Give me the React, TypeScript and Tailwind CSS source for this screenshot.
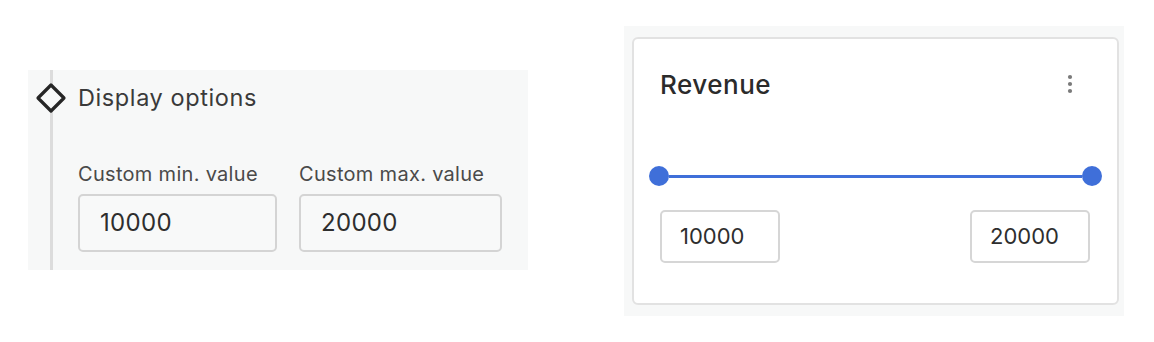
import React from "react";

function Diamond() {
    return (
        <svg width="32" height="32" viewBox="0 0 32 32" className="block">
            <path
                d="M16 3 L29 16 L16 29 L3 16 Z"
                fill="#f7f8f8"
                stroke="#262626"
                strokeWidth="3.2"
                strokeLinejoin="round"
            />
        </svg>
    );
}

function Kebab() {
    return (
        <svg width="6" height="20" viewBox="0 0 6 20" className="block">
            <circle cx="3" cy="3" r="2.1" fill="#7a7a7a" />
            <circle cx="3" cy="10" r="2.1" fill="#7a7a7a" />
            <circle cx="3" cy="17" r="2.1" fill="#7a7a7a" />
        </svg>
    );
}

function Field({ label, value, width }: { label: string; value: string; width: string }) {
    return (
        <div className={`flex flex-col ${width}`}>
            <label className="text-[20px] leading-[24px] text-[#4a4a4a] tracking-[0.3px] whitespace-nowrap">{label}</label>
            <div className="mt-[8px] h-[58px] rounded-[5px] border-2 border-[#d4d4d4] bg-[#f8f9f9] flex items-center pl-[20px] text-[24px] text-[#2e2e2e] tracking-[0.3px]">
                {value}
            </div>
        </div>
    );
}

export default function App() {
    return (
        <div className="w-[1154px] h-[342px] bg-white flex items-start font-['Inter','Liberation_Sans',sans-serif]">
            {/* display options panel */}
            <div className="ml-[28px] mt-[70px] w-[500px] h-[200px] bg-[#f7f8f8] pl-[22px]">
                <div className="relative h-full border-l-[3px] border-[#dcdcdc] pl-[25px] pt-[14px]">
                    <div className="absolute left-[-18px] top-[12px]">
                        <Diamond />
                    </div>
                    <div className="h-[28px] flex items-center text-[23.5px] text-[#3a3a3a] tracking-[0.6px]">
                        Display options
                    </div>
                    <div className="mt-[50px] flex gap-[22px]">
                        <Field label="Custom min. value" value="10000" width="w-[199px]" />
                        <Field label="Custom max. value" value="20000" width="w-[203px]" />
                    </div>
                </div>
            </div>

            {/* revenue card */}
            <div className="ml-[96px] mt-[26px] w-[500px] h-[290px] bg-[#f7f8f8] pl-[8px] pr-[5px] py-[11px]">
                <div className="h-full rounded-[6px] border-2 border-[#e2e2e2] bg-white flex flex-col">
                    <div className="mt-[30px] pl-[26px] pr-[44px] flex items-center justify-between h-[30px]">
                        <span className="text-[26px] font-medium text-[#2b2b2b] tracking-[0.5px]">Revenue</span>
                        <Kebab />
                    </div>
                    <div className="mt-[67px] px-[15px] flex items-center">
                        <div className="w-[20px] h-[20px] rounded-full bg-[#3f6fd9] shrink-0" />
                        <div className="flex-1 h-[3px] bg-[#3f6fd9]" />
                        <div className="w-[20px] h-[20px] rounded-full bg-[#3f6fd9] shrink-0" />
                    </div>
                    <div className="mt-[24px] pl-[26px] pr-[27px] flex justify-between">
                        <div className="w-[120px] h-[53px] rounded-[5px] border-2 border-[#d6d6d6] flex items-center pl-[18px] text-[22px] text-[#2e2e2e]">
                            10000
                        </div>
                        <div className="w-[120px] h-[53px] rounded-[5px] border-2 border-[#d6d6d6] flex items-center pl-[18px] text-[22px] text-[#2e2e2e]">
                            20000
                        </div>
                    </div>
                </div>
            </div>
        </div>
    );
}
